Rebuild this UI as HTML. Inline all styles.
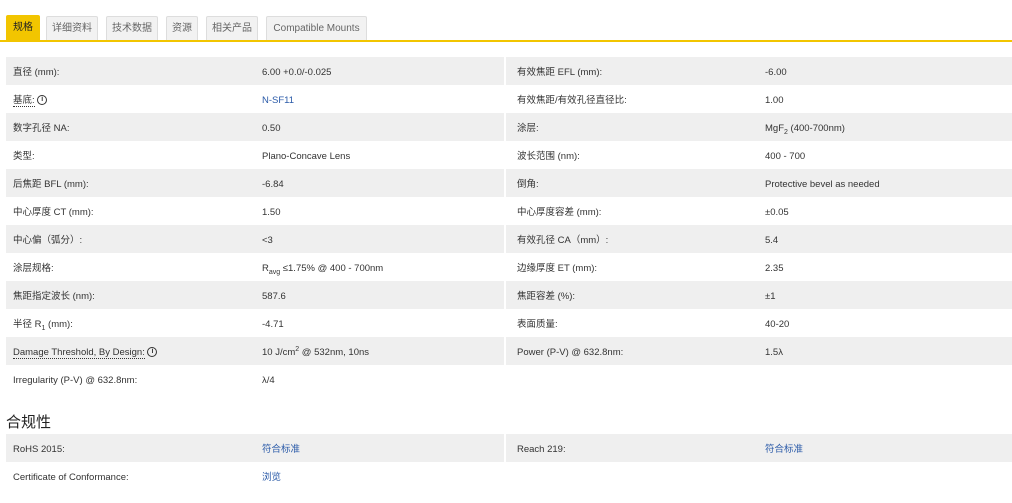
<!DOCTYPE html>
<html><head><meta charset="utf-8"><style>
body{margin:0;background:#fff;font-family:"Liberation Sans","Noto Sans CJK SC",sans-serif;color:#333;font-size:9.5px;width:1012px;height:503px;overflow:hidden;position:relative}
.tabs{position:absolute;left:0;top:0;width:1012px;height:42px;border-bottom:2px solid #f2c500;box-sizing:border-box}
.tab{position:absolute;top:16px;height:24px;background:#f2f2f2;border:1px solid #ddd;border-bottom:none;box-sizing:border-box;border-radius:2px 2px 0 0;font-size:10px;color:#666;line-height:24px;text-align:center}
.tab.a{background:#f2c500;border-color:#f2c500;color:#222;top:15px;height:25px}
table{position:absolute;left:6px;width:1006px;border-collapse:collapse;table-layout:fixed}
td{height:28px;padding:3px 0 0 7px;box-sizing:border-box;vertical-align:middle;white-space:nowrap;line-height:12px}
tr:nth-child(odd) td{background:#efefef}
td.v{border-right:2px solid #fff}
td.l2{padding-left:11px}
sub,sup{font-size:7px;line-height:0}
a{color:#2a5aa8;text-decoration:none}
.u{border-bottom:1px dotted #333}
.i{display:inline-block;width:8px;height:8px;border:1.3px solid #333;border-radius:50%;font-size:7px;line-height:8px;text-align:center;font-weight:bold;vertical-align:middle}
h2{position:absolute;left:6px;top:411px;margin:0;font-size:15px;font-weight:normal;color:#222}
</style></head><body>
<div class="tabs">
<div class="tab a" style="left:6px;width:34px">规格</div>
<div class="tab" style="left:46px;width:52px">详细资料</div>
<div class="tab" style="left:106px;width:52px">技术数据</div>
<div class="tab" style="left:166px;width:32px">资源</div>
<div class="tab" style="left:206px;width:52px">相关产品</div>
<div class="tab" style="left:266px;width:101px">Compatible Mounts</div>
</div>
<table style="top:57px">
<colgroup><col style="width:249px"><col style="width:250px"><col style="width:253px"><col></colgroup>
<tr><td class="l">直径 (mm):</td><td class="v">6.00 +0.0/-0.025</td><td class="l2">有效焦距 EFL (mm):</td><td>-6.00</td></tr>
<tr><td class="l"><span class="u">基底:</span> <span class="i">i</span></td><td class="v"><a>N-SF11</a></td><td class="l2">有效焦距/有效孔径直径比:</td><td>1.00</td></tr>
<tr><td class="l">数字孔径 NA:</td><td class="v">0.50</td><td class="l2">涂层:</td><td>MgF<sub>2</sub> (400-700nm)</td></tr>
<tr><td class="l">类型:</td><td class="v">Plano-Concave Lens</td><td class="l2">波长范围 (nm):</td><td>400 - 700</td></tr>
<tr><td class="l">后焦距 BFL (mm):</td><td class="v">-6.84</td><td class="l2">倒角:</td><td>Protective bevel as needed</td></tr>
<tr><td class="l">中心厚度 CT (mm):</td><td class="v">1.50</td><td class="l2">中心厚度容差 (mm):</td><td>±0.05</td></tr>
<tr><td class="l">中心偏（弧分）:</td><td class="v">&lt;3</td><td class="l2">有效孔径 CA（mm）:</td><td>5.4</td></tr>
<tr><td class="l">涂层规格:</td><td class="v">R<sub>avg</sub> ≤1.75% @ 400 - 700nm</td><td class="l2">边缘厚度 ET (mm):</td><td>2.35</td></tr>
<tr><td class="l">焦距指定波长 (nm):</td><td class="v">587.6</td><td class="l2">焦距容差 (%):</td><td>±1</td></tr>
<tr><td class="l">半径 R<sub>1</sub> (mm):</td><td class="v">-4.71</td><td class="l2">表面质量:</td><td>40-20</td></tr>
<tr><td class="l"><span class="u">Damage Threshold, By Design:</span> <span class="i">i</span></td><td class="v">10 J/cm<sup>2</sup> @ 532nm, 10ns</td><td class="l2">Power (P-V) @ 632.8nm:</td><td>1.5λ</td></tr>
<tr><td class="l">Irregularity (P-V) @ 632.8nm:</td><td class="v" style="border-right:none">λ/4</td><td class="l2"></td><td></td></tr>
</table>
<h2>合规性</h2>
<table style="top:434px">
<colgroup><col style="width:249px"><col style="width:250px"><col style="width:253px"><col></colgroup>
<tr><td class="l">RoHS 2015:</td><td class="v"><a>符合标准</a></td><td class="l2">Reach 219:</td><td><a>符合标准</a></td></tr>
<tr><td class="l">Certificate of Conformance:</td><td class="v" style="border-right:none"><a>浏览</a></td><td class="l2"></td><td></td></tr>
</table>
</body></html>
